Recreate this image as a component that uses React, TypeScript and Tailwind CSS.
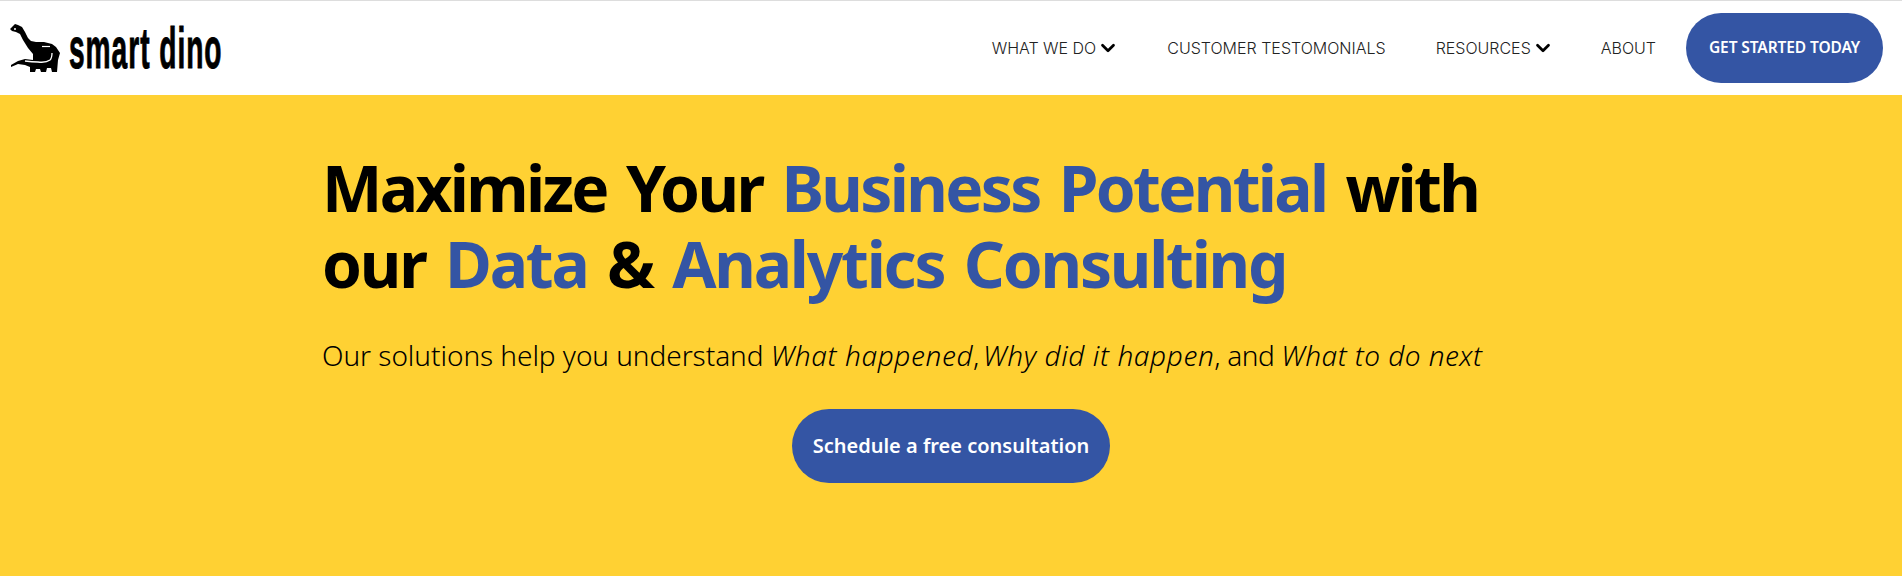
import { ChevronDown } from "lucide-react";

function Dino() {
  return (
    <svg viewBox="9 21 52 50" className="w-[52px] h-[50px] shrink-0">
      <path
        fill="#000"
        d="M10 27 L13 24 L15 22 L18 23 L22 25 L25 30 L28 36 L31 39 L36 40 L44 40 L52 42 L56 45 L60 51 L58 58 L57 70 L52 70 L51 66 L47 66 L46 70 L41 70 L40 67 L36 67 L35 70 L30 70 L30 65 L25 63 L18 62 L11 65 L11 63 L18 59 L25 57 L33 58 L33 52 L28 46 L23 38 L20 32 L16 30 L12 29 Z"
      />
      <circle cx="15" cy="27" r="1" fill="#fff" />
      <path d="M42 44.5 L50 44.5" stroke="#fff" strokeWidth="1.2" fill="none" />
      <path d="M25 59 Q32 60 38 60 Q46 61 50 58 Q52 56 52 51" stroke="#fff" strokeWidth="1.3" fill="none" />
    </svg>
  );
}

export default function App() {
  return (
    <div className="min-h-[576px] bg-[#ffd133] font-['Noto_Sans',sans-serif]">
      {/* Nav */}
      <header className="h-[95px] bg-white border-t border-[#dddddd] flex items-center justify-between pl-[9px] pr-[19px]">
        <div className="flex items-center gap-[8px]">
          <Dino />
          <span className="font-['Liberation_Sans_Narrow','Liberation_Sans',sans-serif] font-bold text-[58px] leading-none origin-left scale-x-[0.485] w-[151px] whitespace-nowrap tracking-[2px] [-webkit-text-stroke:1px_black]">
            smart dino
          </span>
        </div>
        <nav className="flex items-center font-['Inter',sans-serif] font-light text-[16px] text-[#222222]">
          <a className="flex items-center gap-[1px] mr-[48px]">
            WHAT WE DO <ChevronDown className="w-[22px] h-[22px] text-black" strokeWidth={3} />
          </a>
          <a className="mr-[50px]">CUSTOMER TESTOMONIALS</a>
          <a className="flex items-center gap-[1px] mr-[47px]">
            RESOURCES <ChevronDown className="w-[22px] h-[22px] text-black" strokeWidth={3} />
          </a>
          <a className="mr-[30px]">ABOUT</a>
          <a className="w-[197px] h-[70px] rounded-[35px] bg-[#3455a4] text-white font-['Noto_Sans',sans-serif] font-semibold text-[15.5px] tracking-[-0.1px] flex items-center justify-center">
            GET STARTED TODAY
          </a>
        </nav>
      </header>

      {/* Hero */}
      <main className="pl-[322px]">
        <h1 className="pt-[55px] text-[64px] leading-[76px] font-bold text-black whitespace-nowrap [word-spacing:5px]">
          <span className="block tracking-[-2.65px]">
            Maximize Your <span className="text-[#3455a4]">Business Potential</span> with
          </span>
          <span className="block tracking-[-2.2px]">
            our <span className="text-[#3455a4]">Data</span> &amp; <span className="text-[#3455a4]">Analytics Consulting</span>
          </span>
        </h1>
        <p className="mt-[34px] text-[28px] leading-[38px] font-light tracking-[-0.05px] text-black whitespace-nowrap">
          Our solutions help you understand <em className="tracking-[0.6px]">What happened</em>
          <span className="tracking-[-1.8px]">, </span>
          <em className="tracking-[0.6px]">Why did it happen</em>
          <span className="tracking-[-0.4px]">, and </span>
          <em className="tracking-[0.45px]">What to do next</em>
        </p>
        <a className="mt-[35px] ml-[470px] w-[318px] h-[74px] rounded-[37px] bg-[#3455a4] text-white text-[20px] font-semibold flex items-center justify-center">
          Schedule a free consultation
        </a>
      </main>
    </div>
  );
}
